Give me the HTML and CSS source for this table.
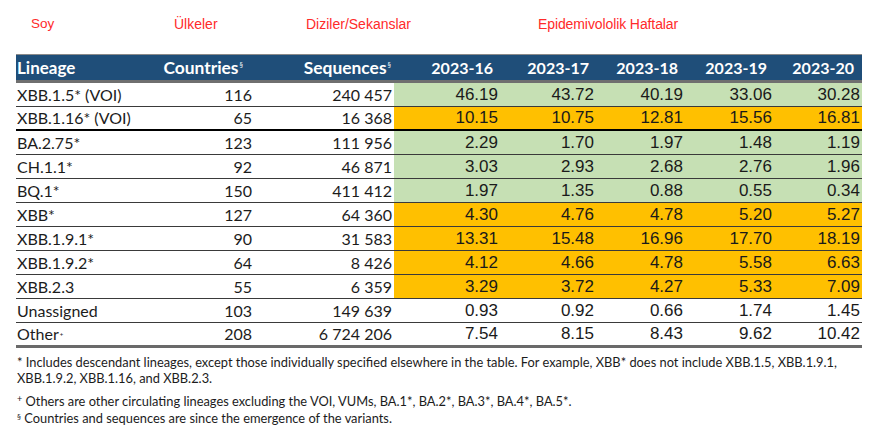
FILE: index.html
```html
<!DOCTYPE html>
<html>
<head>
<meta charset="utf-8">
<link rel="stylesheet" href="styles.css">
</head>
<body>
<div class="labels">
  <span class="lab lab-soy">Soy</span>
  <span class="lab lab-ulk">Ülkeler</span>
  <span class="lab lab-diz">Diziler/Sekanslar</span>
  <span class="lab lab-epi">Epidemivololik Haftalar</span>
</div>
<table class="tbl">
  <colgroup>
    <col class="c-lin"><col class="c-cty"><col class="c-seq">
    <col class="c-w1"><col class="c-w2"><col class="c-w3"><col class="c-w4"><col class="c-w5">
  </colgroup>
  <thead>
    <tr>
      <th class="h-lin">Lineage</th>
      <th class="h-cty">Countries<sup class="sec">§</sup></th>
      <th class="h-seq">Sequences<sup class="sec">§</sup></th>
      <th class="h-wk">2023-16</th>
      <th class="h-wk">2023-17</th>
      <th class="h-wk">2023-18</th>
      <th class="h-wk">2023-19</th>
      <th class="h-wk h-last">2023-20</th>
    </tr>
  </thead>
  <tbody>
    <tr class="g"><td class="lin">XBB.1.5* (VOI)</td><td class="num">116</td><td class="seq">240 457</td><td class="wk">46.19</td><td class="wk">43.72</td><td class="wk">40.19</td><td class="wk">33.06</td><td class="wk last">30.28</td></tr>
    <tr class="o sep"><td class="lin">XBB.1.16* (VOI)</td><td class="num">65</td><td class="seq">16 368</td><td class="wk">10.15</td><td class="wk">10.75</td><td class="wk">12.81</td><td class="wk">15.56</td><td class="wk last">16.81</td></tr>
    <tr class="g"><td class="lin">BA.2.75*</td><td class="num">123</td><td class="seq">111 956</td><td class="wk">2.29</td><td class="wk">1.70</td><td class="wk">1.97</td><td class="wk">1.48</td><td class="wk last">1.19</td></tr>
    <tr class="g"><td class="lin">CH.1.1*</td><td class="num">92</td><td class="seq">46 871</td><td class="wk">3.03</td><td class="wk">2.93</td><td class="wk">2.68</td><td class="wk">2.76</td><td class="wk last">1.96</td></tr>
    <tr class="g"><td class="lin">BQ.1*</td><td class="num">150</td><td class="seq">411 412</td><td class="wk">1.97</td><td class="wk">1.35</td><td class="wk">0.88</td><td class="wk">0.55</td><td class="wk last">0.34</td></tr>
    <tr class="o"><td class="lin">XBB*</td><td class="num">127</td><td class="seq">64 360</td><td class="wk">4.30</td><td class="wk">4.76</td><td class="wk">4.78</td><td class="wk">5.20</td><td class="wk last">5.27</td></tr>
    <tr class="o"><td class="lin">XBB.1.9.1*</td><td class="num">90</td><td class="seq">31 583</td><td class="wk">13.31</td><td class="wk">15.48</td><td class="wk">16.96</td><td class="wk">17.70</td><td class="wk last">18.19</td></tr>
    <tr class="o"><td class="lin">XBB.1.9.2*</td><td class="num">64</td><td class="seq">8 426</td><td class="wk">4.12</td><td class="wk">4.66</td><td class="wk">4.78</td><td class="wk">5.58</td><td class="wk last">6.63</td></tr>
    <tr class="o"><td class="lin">XBB.2.3</td><td class="num">55</td><td class="seq">6 359</td><td class="wk">3.29</td><td class="wk">3.72</td><td class="wk">4.27</td><td class="wk">5.33</td><td class="wk last">7.09</td></tr>
    <tr><td class="lin">Unassigned</td><td class="num">103</td><td class="seq">149 639</td><td class="wk">0.93</td><td class="wk">0.92</td><td class="wk">0.66</td><td class="wk">1.74</td><td class="wk last">1.45</td></tr>
    <tr class="end"><td class="lin">Other<sup class="plus">+</sup></td><td class="num">208</td><td class="seq">6 724 206</td><td class="wk">7.54</td><td class="wk">8.15</td><td class="wk">8.43</td><td class="wk">9.62</td><td class="wk last">10.42</td></tr>
  </tbody>
</table>
<div class="notes">
  <p class="note note-1">* Includes descendant lineages, except those individually specified elsewhere in the table. For example, XBB* does not include XBB.1.5, XBB.1.9.1, XBB.1.9.2, XBB.1.16, and XBB.2.3.</p>
  <p class="note note-2"><sup class="fn">+</sup> Others are other circulating lineages excluding the VOI, VUMs, BA.1*, BA.2*, BA.3*, BA.4*, BA.5*.</p>
  <p class="note note-3"><sup class="fn fn-s">§</sup> Countries and sequences are since the emergence of the variants.</p>
</div>
</body>
</html>
```
FILE: styles.css
```css
html, body {
  margin: 0;
  padding: 0;
  background: #ffffff;
}
body {
  width: 871px;
  height: 428px;
  overflow: hidden;
  font-family: Lato, "Liberation Sans", sans-serif;
  color: #1c1c1c;
}
.labels {
  display: flex;
  box-sizing: border-box;
  height: 54px;
  padding: 16px 0 0 31px;
  font-family: "Liberation Sans", Arial, sans-serif;
  font-size: 14px;
  line-height: 16px;
  color: #ff2a2a;
}
.lab-soy { width: 143px; font-size: 13.5px; }
.lab-ulk { width: 132px; }
.lab-diz { width: 232px; }
.lab-epi { letter-spacing: -0.1px; }

.tbl {
  margin-left: 16px;
  width: 846px;
  table-layout: fixed;
  border-collapse: separate;
  border-spacing: 0;
}
.c-lin { width: 134px; }
.c-cty { width: 106px; }
.c-seq { width: 138px; }
.c-w1 { width: 108px; }
.c-w2 { width: 96px; }
.c-w3 { width: 89px; }
.c-w4 { width: 89px; }
.c-w5 { width: 86px; }

th {
  background: #1f4e79;
  color: #ffffff;
  font-weight: 700;
  font-size: 16px;
  line-height: 25px;
  padding: 0;
  border-top: 1px solid #8a8a8a;
  border-bottom: 3px solid #6f6f6f;
  white-space: nowrap;
}
.h-lin { text-align: left; padding-left: 1px; font-size: 17px; }
.h-cty { text-align: right; padding-right: 13px; font-size: 17.4px; }
.h-seq { text-align: right; padding-right: 3px; font-size: 17.4px; }
.h-wk { text-align: right; padding-right: 9px; }
.h-last { padding-right: 8px; }
.sec {
  font-size: 7px;
  font-weight: 400;
  vertical-align: 6px;
  line-height: 0;
  margin-left: 1px;
}

td {
  font-size: 16px;
  line-height: 23px;
  padding: 0;
  border-bottom: 1px solid #3a3a3a;
  white-space: nowrap;
}
.lin { text-align: left; padding-left: 1px; }
.num { text-align: right; padding-right: 4px; }
.seq { text-align: right; padding-right: 2px; }
.wk {
  text-align: right;
  padding-right: 4px;
  font-family: "Liberation Sans", Arial, sans-serif;
  font-size: 17px;
  color: #1a1a1a;
}
.wk.last { padding-right: 2px; }
tr.g .wk { background: #c6e0b4; }
tr.o .wk { background: #ffc000; }
tr.sep td { border-bottom: 2px solid #000000; line-height: 22px; }
tr.end td { border-bottom: 3px solid #6a6a6a; line-height: 22px; }
.plus {
  font-size: 6px;
  vertical-align: 3px;
  line-height: 0;
  margin-left: 1px;
}

.notes {
  padding: 6px 0 0 17px;
  width: 845px;
  font-size: 12.85px;
  color: #1c1c1c;
}
.note { margin: 0; line-height: 16px; }
.note-1 { margin-bottom: 7px; }
.note-2 { margin-bottom: 1px; }
.fn {
  font-size: 9px;
  line-height: 0;
  vertical-align: 4px;
}
.fn-s { font-size: 8px; vertical-align: 3px; }
```
